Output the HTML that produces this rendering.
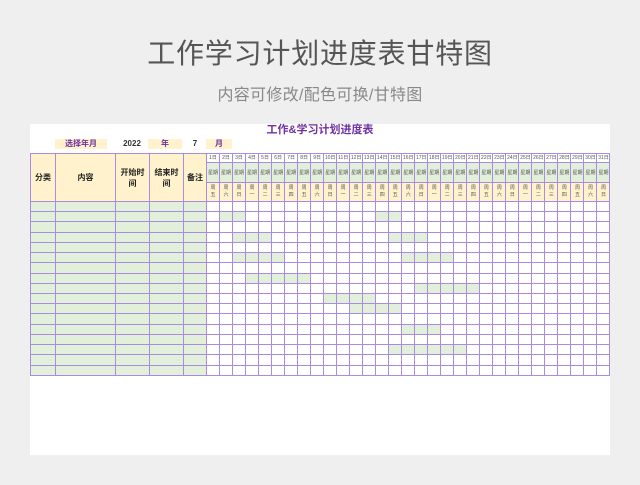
<!DOCTYPE html>
<html><head><meta charset="utf-8">
<style>
*{margin:0;padding:0;box-sizing:border-box}
body{width:640px;height:485px;background:#efefef;font-family:"Liberation Sans","Noto Sans CJK SC",sans-serif;position:relative;overflow:hidden}
.t1{position:absolute;top:37px;left:0;width:640px;text-align:center;font-size:28px;color:#555;letter-spacing:0.8px;line-height:34px}
.t2{position:absolute;top:86px;left:0;width:640px;text-align:center;font-size:16px;color:#888;line-height:20px;letter-spacing:0.3px}
.card{position:absolute;left:30px;top:124px;width:580px;height:331px;background:#fff}
.ttl{position:absolute;left:0;top:0;width:580px;text-align:center;font-size:11px;font-weight:bold;color:#7030a0;line-height:13px}
.sel{position:absolute;top:15px;height:10px;font-size:8px;font-weight:bold;line-height:10px;text-align:center;color:#333}
.y{background:#fff2cc;color:#7030a0}
table{position:absolute;left:0;top:29px;border-collapse:collapse;table-layout:fixed;width:580px;border:1.5px solid #9b7fd0}
td{border:1px solid #a98be0;padding:0;text-align:center;overflow:hidden;white-space:nowrap}
.h{background:#fff2cc;font-size:8px;font-weight:bold;color:#222;line-height:11px;white-space:normal}
.d{font-size:5px;color:#555;height:9px;line-height:8px}
.w{font-size:5px;color:#555;background:#e2efda;height:20px}
.k{font-size:5px;color:#555;background:#fff2cc;height:19px;line-height:7px;white-space:normal}
.g{background:#e2efda}
tbody td{height:10.23px}
</style></head><body>
<div class="t1">工作学习计划进度表甘特图</div>
<div class="t2">内容可修改/配色可换/甘特图</div>
<div class="card">
<div class="ttl">工作&amp;学习计划进度表</div>
<div class="sel y" style="left:25px;width:52px">选择年月</div>
<div class="sel" style="left:85px;width:34px">2022</div>
<div class="sel y" style="left:118px;width:34px">年</div>
<div class="sel" style="left:153px;width:24px">7</div>
<div class="sel y" style="left:176px;width:26px">月</div>
<table>
<colgroup><col style="width:25px"><col style="width:60px"><col style="width:34px"><col style="width:34px"><col style="width:23px">
<col span="31" style="width:13.03px"></colgroup>
<thead>
<tr><td class="h" rowspan="3">分类</td><td class="h" rowspan="3">内容</td><td class="h" rowspan="3">开始时<br>间</td><td class="h" rowspan="3">结束时<br>间</td><td class="h" rowspan="3">备注</td>
<td class="d">1日</td><td class="d">2日</td><td class="d">3日</td><td class="d">4日</td><td class="d">5日</td><td class="d">6日</td><td class="d">7日</td><td class="d">8日</td><td class="d">9日</td><td class="d">10日</td><td class="d">11日</td><td class="d">12日</td><td class="d">13日</td><td class="d">14日</td><td class="d">15日</td><td class="d">16日</td><td class="d">17日</td><td class="d">18日</td><td class="d">19日</td><td class="d">20日</td><td class="d">21日</td><td class="d">22日</td><td class="d">23日</td><td class="d">24日</td><td class="d">25日</td><td class="d">26日</td><td class="d">27日</td><td class="d">28日</td><td class="d">29日</td><td class="d">30日</td><td class="d">31日</td></tr>
<tr><td class="w">星期</td><td class="w">星期</td><td class="w">星期</td><td class="w">星期</td><td class="w">星期</td><td class="w">星期</td><td class="w">星期</td><td class="w">星期</td><td class="w">星期</td><td class="w">星期</td><td class="w">星期</td><td class="w">星期</td><td class="w">星期</td><td class="w">星期</td><td class="w">星期</td><td class="w">星期</td><td class="w">星期</td><td class="w">星期</td><td class="w">星期</td><td class="w">星期</td><td class="w">星期</td><td class="w">星期</td><td class="w">星期</td><td class="w">星期</td><td class="w">星期</td><td class="w">星期</td><td class="w">星期</td><td class="w">星期</td><td class="w">星期</td><td class="w">星期</td><td class="w">星期</td></tr>
<tr><td class="k">周<br>五</td><td class="k">周<br>六</td><td class="k">周<br>日</td><td class="k">周<br>一</td><td class="k">周<br>二</td><td class="k">周<br>三</td><td class="k">周<br>四</td><td class="k">周<br>五</td><td class="k">周<br>六</td><td class="k">周<br>日</td><td class="k">周<br>一</td><td class="k">周<br>二</td><td class="k">周<br>三</td><td class="k">周<br>四</td><td class="k">周<br>五</td><td class="k">周<br>六</td><td class="k">周<br>日</td><td class="k">周<br>一</td><td class="k">周<br>二</td><td class="k">周<br>三</td><td class="k">周<br>四</td><td class="k">周<br>五</td><td class="k">周<br>六</td><td class="k">周<br>日</td><td class="k">周<br>一</td><td class="k">周<br>二</td><td class="k">周<br>三</td><td class="k">周<br>四</td><td class="k">周<br>五</td><td class="k">周<br>六</td><td class="k">周<br>日</td></tr>
</thead>
<tbody id="b"></tbody>
</table>
</div>
<script>
var bars={1:[[1,2],[13,14]],3:[[2,4],[14,16]],5:[[2,5],[15,18]],7:[[3,7]],8:[[16,20]],9:[[9,12]],10:[[11,14]],12:[[15,17]],14:[[14,19]]};
var h='';
for(var r=0;r<17;r++){
 h+='<tr>';
 for(var c=0;c<5;c++)h+='<td class="g"></td>';
 for(var d=0;d<31;d++){
  var on=false;(bars[r]||[]).forEach(function(b){if(d>=b[0]&&d<=b[1])on=true;});
  h+='<td'+(on?' class="g"':'')+'></td>';
 }
 h+='</tr>';
}
document.getElementById('b').innerHTML=h;
</script>
</body></html>
